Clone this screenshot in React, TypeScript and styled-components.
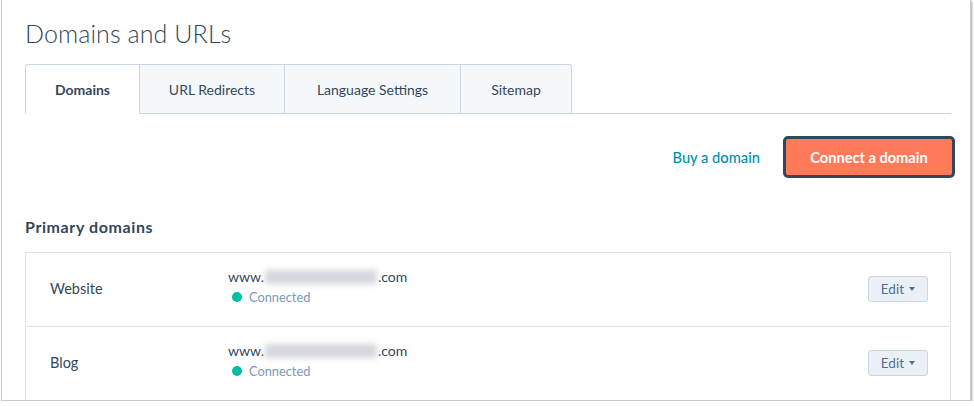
import styled, { createGlobalStyle } from "styled-components";

const GlobalStyle = createGlobalStyle`
  html, body {
    margin: 0;
    padding: 0;
    background: #ffffff;
  }
  body {
    font-family: Lato, "Noto Sans", "Liberation Sans", sans-serif;
    color: #33475b;
  }
`;

const Frame = styled.div`
  width: 970px;
  height: 401px;
  margin-left: 1px;
  border: 1px solid #c9c9c9;
  border-top: none;
  box-shadow: 1px 1px 2px rgba(0, 0, 0, 0.35);
  overflow: hidden;
  background: #fff;
  box-sizing: border-box;
`;

const Page = styled.div`
  padding: 17px 19px 0 23px;
`;

const Title = styled.h1`
  margin: 0;
  font-size: 25px;
  font-weight: 300;
  line-height: 32px;
  letter-spacing: 0.1px;
  color: #33475b;
`;

const TabBar = styled.div`
  display: flex;
  margin-top: 15px;
  border-bottom: 1px solid #cbd6e2;
  height: 49px;
`;

const Tab = styled.div<{ $active?: boolean; $width: number }>`
  width: ${(p) => p.$width}px;
  box-sizing: border-box;
  display: flex;
  align-items: center;
  justify-content: center;
  font-size: 14px;
  font-weight: ${(p) => (p.$active ? 700 : 400)};
  color: #33475b;
  background: ${(p) => (p.$active ? "#ffffff" : "#f5f8fa")};
  border: 1px solid #cbd6e2;
  border-left-width: ${(p) => (p.$active ? 1 : 0)}px;
  border-bottom: ${(p) => (p.$active ? "1px solid #ffffff" : "none")};
  margin-bottom: ${(p) => (p.$active ? -1 : 0)}px;
  height: ${(p) => (p.$active ? 50 : 49)}px;
  border-top-left-radius: ${(p) => (p.$active ? 3 : 0)}px;
  &:last-child {
    border-top-right-radius: 3px;
  }
`;

const Actions = styled.div`
  display: flex;
  justify-content: flex-end;
  align-items: center;
  gap: 23px;
  margin-top: 22px;
  margin-right: -4px;
`;

const LinkButton = styled.a`
  color: #0091ae;
  font-size: 14.7px;
  font-weight: 500;
  text-decoration: none;
`;

const PrimaryButton = styled.button`
  width: 172px;
  height: 42px;
  background: #ff7a59;
  color: #fff;
  font-family: inherit;
  font-size: 14.6px;
  font-weight: 700;
  border: 3px solid #33475b;
  border-radius: 5px;
  cursor: pointer;
`;

const SectionTitle = styled.h2`
  margin: 40px 0 0;
  font-size: 16px;
  font-weight: 700;
  line-height: 18px;
  letter-spacing: 0.6px;
  color: #33475b;
`;

const Table = styled.div`
  margin-top: 16px;
  border: 1px solid #dfe3eb;
  border-bottom: none;
`;

const Row = styled.div`
  display: flex;
  align-items: center;
  height: 73px;
  border-bottom: 1px solid #dfe3eb;
  padding: 0 22px 0 24px;
`;

const Label = styled.div`
  width: 178px;
  font-size: 14.5px;
  color: #33475b;
  margin-top: -2px;
`;

const DomainCell = styled.div`
  flex: 1;
  display: flex;
  flex-direction: column;
  gap: 3px;
  margin-top: -6px;
`;

const DomainText = styled.div`
  display: flex;
  align-items: center;
  font-size: 14px;
  color: #33475b;
  line-height: 18px;
`;

const Blur = styled.span`
  display: inline-block;
  width: 112px;
  height: 14px;
  background: #d3d6db;
  filter: blur(3px);
  margin: 0 1px;
`;

const Status = styled.div`
  display: flex;
  align-items: center;
  gap: 7px;
  padding-left: 4px;
  font-size: 12.8px;
  color: #7c98b6;
`;

const Dot = styled.span`
  width: 10px;
  height: 10px;
  border-radius: 50%;
  background: #00bda5;
`;

const EditButton = styled.button`
  display: flex;
  align-items: center;
  gap: 5px;
  height: 26px;
  margin-top: -2px;
  padding: 0 12px;
  background: #eaf0f6;
  border: 1px solid #cbd6e2;
  border-radius: 3px;
  color: #506e91;
  font-family: inherit;
  font-size: 13.5px;
  cursor: pointer;
`;

const Caret = styled.span`
  width: 0;
  height: 0;
  border-left: 3.5px solid transparent;
  border-right: 3.5px solid transparent;
  border-top: 4px solid #506e91;
`;

const tabs = [
  { label: "Domains", width: 115, active: true },
  { label: "URL Redirects", width: 145 },
  { label: "Language Settings", width: 176 },
  { label: "Sitemap", width: 111 },
];

const domains = [{ label: "Website" }, { label: "Blog" }];

export default function App() {
  return (
    <>
      <GlobalStyle />
      <Frame>
        <Page>
          <Title>Domains and URLs</Title>
          <TabBar>
            {tabs.map((t) => (
              <Tab key={t.label} $active={t.active} $width={t.width}>
                {t.label}
              </Tab>
            ))}
          </TabBar>
          <Actions>
            <LinkButton href="#">Buy a domain</LinkButton>
            <PrimaryButton>Connect a domain</PrimaryButton>
          </Actions>
          <SectionTitle>Primary domains</SectionTitle>
          <Table>
            {domains.map((d) => (
              <Row key={d.label}>
                <Label>{d.label}</Label>
                <DomainCell>
                  <DomainText>
                    www.
                    <Blur />
                    .com
                  </DomainText>
                  <Status>
                    <Dot />
                    Connected
                  </Status>
                </DomainCell>
                <EditButton>
                  Edit
                  <Caret />
                </EditButton>
              </Row>
            ))}
          </Table>
        </Page>
      </Frame>
    </>
  );
}
